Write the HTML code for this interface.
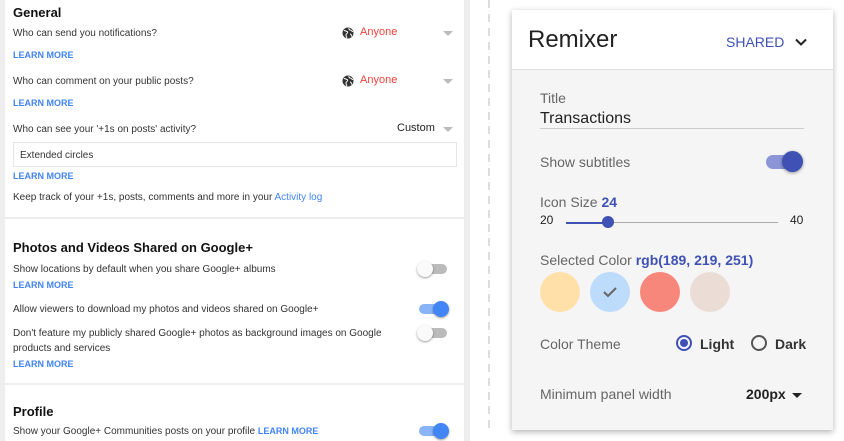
<!DOCTYPE html>
<html><head><style>
*{margin:0;padding:0;box-sizing:border-box}
body{width:844px;height:441px;overflow:hidden;background:#fff;font-family:"Liberation Sans",sans-serif;position:relative}
.a{position:absolute;white-space:nowrap}
#left{position:absolute;left:0;top:0;width:470px;height:441px;background:#eee}
.card{position:absolute;left:5px;width:459px;background:#fff}
.t{font-size:10px;color:#333}
.lm{font-size:9px;color:#4285f4;font-weight:bold}
.h{font-size:13px;font-weight:bold;color:#111}
.sw{position:absolute;width:28px;height:10px;border-radius:5px}
.sw i{position:absolute;top:-3px;width:16px;height:16px;border-radius:50%;box-shadow:0 1px 2px rgba(0,0,0,.4)}
.off{background:#bbb}.off i{left:-2px;background:#fafafa}
.on{background:#8ab4f8}.on i{right:-2px;background:#4285f4}
.dd{position:absolute;width:0;height:0;border-left:5px solid transparent;border-right:5px solid transparent;border-top:5px solid #bbb}
.r{font-size:14px;color:#666}
</style></head><body>
<div id="left">
<div class="card" style="top:0;height:217px">
<div class="a h" style="left:8px;top:5px">General</div>
<div class="a t" style="left:8px;top:28px">Who can send you notifications?</div>
<svg class="a" style="left:337px;top:27px" width="12" height="12" viewBox="0 0 12 12"><circle cx="6" cy="6" r="5.5" fill="#333"/><path d="M2 3.5c1.5 0 2 1 3 1s.5 2 -.5 2.5-.5 2.5.5 4M7 1c-.5 1 .5 2 1.5 2s1 1.5 2.5 1.5M8 7c1 0 1.5 1 1.5 2.5" fill="none" stroke="#fff" stroke-width="1"/></svg>
<div class="a" style="left:355px;top:26px;font-size:11px;color:#f4433c">Anyone</div>
<div class="dd" style="left:438px;top:31px"></div>
<div class="a lm" style="left:8px;top:50px">LEARN MORE</div>
<div class="a t" style="left:8px;top:76px">Who can comment on your public posts?</div>
<svg class="a" style="left:337px;top:75px" width="12" height="12" viewBox="0 0 12 12"><circle cx="6" cy="6" r="5.5" fill="#333"/><path d="M2 3.5c1.5 0 2 1 3 1s.5 2 -.5 2.5-.5 2.5.5 4M7 1c-.5 1 .5 2 1.5 2s1 1.5 2.5 1.5M8 7c1 0 1.5 1 1.5 2.5" fill="none" stroke="#fff" stroke-width="1"/></svg>
<div class="a" style="left:355px;top:74px;font-size:11px;color:#f4433c">Anyone</div>
<div class="dd" style="left:438px;top:79px"></div>
<div class="a lm" style="left:8px;top:98px">LEARN MORE</div>
<div class="a t" style="left:8px;top:124px">Who can see your '+1s on posts' activity?</div>
<div class="a" style="left:392px;top:122px;font-size:11px;color:#222">Custom</div>
<div class="dd" style="left:438px;top:127px"></div>
<div class="a" style="left:8px;top:142px;width:444px;height:25px;border:1px solid #e6e6e6"></div>
<div class="a t" style="left:15px;top:150px">Extended circles</div>
<div class="a lm" style="left:8px;top:171px">LEARN MORE</div>
<div class="a t" style="left:8px;top:192px">Keep track of your +1s, posts, comments and more in your <span style="color:#4285f4">Activity log</span></div>
</div>
<div class="card" style="top:219px;height:164px">
<div class="a h" style="left:8px;top:21px">Photos and Videos Shared on Google+</div>
<div class="a t" style="left:8px;top:45px">Show locations by default when you share Google+ albums</div>
<div class="sw off" style="left:414px;top:45px"><i></i></div>
<div class="a lm" style="left:8px;top:61px">LEARN MORE</div>
<div class="a t" style="left:8px;top:85px">Allow viewers to download my photos and videos shared on Google+</div>
<div class="sw on" style="left:414px;top:85px"><i></i></div>
<div class="a t" style="left:8px;top:109px">Don't feature my publicly shared Google+ photos as background images on Google</div>
<div class="a t" style="left:8px;top:124px">products and services</div>
<div class="sw off" style="left:414px;top:109px"><i></i></div>
<div class="a lm" style="left:8px;top:140px">LEARN MORE</div>
</div>
<div class="card" style="top:385px;height:56px">
<div class="a h" style="left:8px;top:19px">Profile</div>
<div class="a t" style="left:8px;top:41px">Show your Google+ Communities posts on your profile <span class="lm" style="font-size:9px">LEARN MORE</span></div>
<div class="sw on" style="left:414px;top:41px"><i></i></div>
</div>
</div>
<div class="a" style="left:488px;top:0;width:2px;height:432px;background:repeating-linear-gradient(#ddd 0 8px,transparent 8px 14px)"></div>
<div class="a" style="left:512px;top:10px;width:321px;height:420px;background:#f5f5f5;box-shadow:0 2px 6px rgba(0,0,0,.3)">
<div class="a" style="left:0;top:0;width:321px;height:60px;background:#fff;border-bottom:1px solid #ddd"></div>
<div class="a" style="left:16px;top:16px;font-size:24px;color:#222">Remixer</div>
<div class="a" style="left:214px;top:24px;font-size:14px;color:#3f51b5">SHARED</div>
<svg class="a" style="left:282px;top:25px" width="14" height="14" viewBox="0 0 14 14"><path d="M2 4.5l5 5 5-5" fill="none" stroke="#222" stroke-width="2"/></svg>
<div class="a" style="left:28px;top:80px;font-size:14px;color:#666">Title</div>
<div class="a" style="left:28px;top:100px;font-size:16px;color:#222">Transactions</div>
<div class="a" style="left:28px;top:118px;width:264px;border-top:1px solid #ccc"></div>
<div class="a r" style="left:28px;top:144px">Show subtitles</div>
<div class="a" style="left:254px;top:145px;width:32px;height:14px;border-radius:7px;background:#8c96d6"></div>
<div class="a" style="left:270px;top:141px;width:21px;height:21px;border-radius:50%;background:#3f51b5;box-shadow:0 1px 3px rgba(0,0,0,.4)"></div>
<div class="a r" style="left:28px;top:184px">Icon Size <b style="color:#3f51b5">24</b></div>
<div class="a" style="left:28px;top:203px;font-size:12px;color:#222">20</div>
<div class="a" style="left:54px;top:212px;width:42px;height:2px;background:#3f51b5"></div>
<div class="a" style="left:96px;top:212px;width:170px;height:1px;background:#aaa"></div>
<div class="a" style="left:90px;top:206px;width:12px;height:12px;border-radius:50%;background:#3f51b5"></div>
<div class="a" style="left:278px;top:203px;font-size:12px;color:#222">40</div>
<div class="a r" style="left:28px;top:242px">Selected Color <b style="color:#3f51b5">rgb(189, 219, 251)</b></div>
<div class="a" style="left:28px;top:262px;width:40px;height:40px;border-radius:50%;background:#ffe0a8"></div>
<div class="a" style="left:78px;top:262px;width:40px;height:40px;border-radius:50%;background:#bddbfb"></div>
<svg class="a" style="left:88px;top:272px" width="20" height="20" viewBox="0 0 20 20"><path d="M4 10l4 4 8-8" fill="none" stroke="#666" stroke-width="2"/></svg>
<div class="a" style="left:128px;top:262px;width:40px;height:40px;border-radius:50%;background:#f6877a"></div>
<div class="a" style="left:178px;top:262px;width:40px;height:40px;border-radius:50%;background:#ebdcd6"></div>
<div class="a r" style="left:28px;top:326px">Color Theme</div>
<div class="a" style="left:164px;top:325px;width:16px;height:16px;border-radius:50%;border:2px solid #3f51b5"></div>
<div class="a" style="left:168px;top:329px;width:8px;height:8px;border-radius:50%;background:#3f51b5"></div>
<div class="a" style="left:188px;top:326px;font-size:14px;font-weight:bold;color:#333">Light</div>
<div class="a" style="left:239px;top:325px;width:16px;height:16px;border-radius:50%;border:2px solid #555"></div>
<div class="a" style="left:263px;top:326px;font-size:14px;font-weight:bold;color:#333">Dark</div>
<div class="a r" style="left:28px;top:376px">Minimum panel width</div>
<div class="a" style="left:234px;top:376px;font-size:14px;font-weight:bold;color:#222">200px</div>
<div class="a" style="left:280px;top:383px;border-left:5px solid transparent;border-right:5px solid transparent;border-top:5px solid #222"></div>
</div>
</body></html>
